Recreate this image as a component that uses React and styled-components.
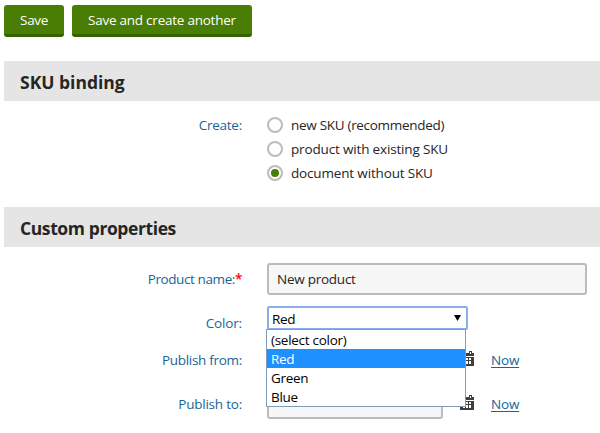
import React from "react";
import styled, { createGlobalStyle, css } from "styled-components";

const Global = createGlobalStyle`
  * { box-sizing: border-box; }
  body {
    margin: 0;
    width: 600px;
    height: 433px;
    overflow: hidden;
    background: #fff;
    color: #262524;
    font: 13.5px/20px "Open Sans", "Segoe UI", sans-serif;
    letter-spacing: -0.28px;
  }
`;

const Page = styled.main`
  padding: 5px 0 0 4px;
`;

const Toolbar = styled.div`
  display: flex;
  gap: 8px;
  height: 32px;
`;

const Button = styled.button`
  width: ${(p) => p.$width}px;
  height: 32px;
  padding: 0 0 0 16px;
  border: 0;
  border-bottom: 3px solid #386202;
  border-radius: 3px;
  background: #497d04;
  color: #fff;
  font: inherit;
  letter-spacing: ${(p) => p.$spacing || 0}px;
  text-align: left;
  white-space: nowrap;
`;

const SectionHeading = styled.h2`
  height: 40px;
  margin: ${(p) => p.$top}px 0 0;
  padding-left: 16px;
  background: #e5e5e5;
  font-size: 17.5px;
  font-weight: 700;
  line-height: 42px;
  letter-spacing: ${(p) => p.$spacing}px;
`;

const Row = styled.div`
  display: grid;
  grid-template-columns: 238px 1fr;
  column-gap: 25px;
  margin-top: ${(p) => p.$top}px;
`;

const Label = styled.label`
  height: ${(p) => p.$height || 32}px;
  line-height: ${(p) => p.$line || p.$height || 32}px;
  color: #1a6496;
  text-align: right;
  white-space: nowrap;
  letter-spacing: ${(p) => p.$spacing ?? -0.2}px;
`;

const Required = styled.span`
  color: #f00;
  font-weight: 600;
`;

const RadioList = styled.div`
  display: grid;
  grid-auto-rows: 24px;
`;

const RadioOption = styled.div`
  display: flex;
  align-items: center;
  gap: 8px;
  white-space: nowrap;
  letter-spacing: ${(p) => p.$spacing}px;
`;

const RadioMark = styled.span`
  display: grid;
  place-items: center;
  width: 16px;
  height: 16px;
  border: 2px solid #bdbbbb;
  border-radius: 50%;
  background: #fff;
  ${(p) =>
    p.$checked &&
    css`
      &::after {
        content: "";
        width: 8px;
        height: 8px;
        border-radius: 50%;
        background: #497d04;
      }
    `}
`;

const Field = styled.div`
  width: ${(p) => p.$width}px;
  height: 32px;
  padding-left: 8px;
  border: 2px solid #bdbbbb;
  border-radius: 3px;
  background: #f7f7f7;
  line-height: 28px;
  letter-spacing: -0.25px;
`;

const SelectWrap = styled.div`
  position: relative;
  width: 201px;
  height: 24px;
`;

const SelectBox = styled.div`
  display: flex;
  align-items: center;
  justify-content: space-between;
  height: 24px;
  padding: 2px 5px 0 3px;
  border: 2px solid #8aaeeb;
  border-radius: 2px;
  background: #fff;
  color: #000;

  svg {
    display: block;
    margin-top: -3px;
  }
`;

const Options = styled.div`
  position: absolute;
  z-index: 1;
  top: 23px;
  left: -1px;
  width: 200px;
  border: 1px solid #7f9db9;
  background: #fff;
  color: #000;
`;

const Option = styled.div`
  height: 19px;
  padding-left: 4px;
  line-height: 20px;
  background: ${(p) => (p.$active ? "#1e90ff" : "#fff")};
  color: ${(p) => (p.$active ? "#fff" : "#000")};
`;

const DateControl = styled.div`
  display: flex;
  align-items: flex-start;
  height: 32px;

  svg {
    margin: 8px 17px 0;
    flex: none;
  }
`;

const NowLink = styled.a`
  color: #1a6496;
  letter-spacing: -0.2px;
  text-decoration: underline;
  text-underline-offset: 2px;
  line-height: 34px;
`;

const CalendarIcon = () => (
  <svg width="14" height="15" viewBox="0 0 14 15" shapeRendering="crispEdges">
    <path
      fill="#403e3d"
      fillRule="evenodd"
      d="M0 2h2V0h3v2h4V0h3v2h2v3H0zM3 1v2h1V1zM10 1v2h1V1zM0 6h14v9H0zM3 7v2h2V7zM6 7v2h2V7zM9 7v2h2V7zM3 10v3h2v-3zM6 10v3h2v-3zM9 10v3h2v-3z"
    />
  </svg>
);

const DateField = () => (
  <DateControl>
    <Field $width={176} />
    <CalendarIcon />
    <NowLink>Now</NowLink>
  </DateControl>
);

const choices = [
  { text: "new SKU (recommended)", spacing: -0.3 },
  { text: "product with existing SKU", spacing: -0.16 },
  { text: "document without SKU", spacing: -0.16, checked: true },
];

const colors = ["(select color)", "Red", "Green", "Blue"];

export default function App() {
  return (
    <>
      <Global />
      <Page>
        <Toolbar>
          <Button $width={60} $spacing={-0.27}>Save</Button>
          <Button $width={180} $spacing={-0.24}>Save and create another</Button>
        </Toolbar>

        <SectionHeading $top={24} $spacing={0}>SKU binding</SectionHeading>
        <Row $top={12}>
          <Label $height={24} $spacing={-0.25}>Create:</Label>
          <RadioList>
            {choices.map((c) => (
              <RadioOption key={c.text} $spacing={c.spacing}>
                <RadioMark $checked={c.checked} />
                {c.text}
              </RadioOption>
            ))}
          </RadioList>
        </Row>

        <SectionHeading $top={22} $spacing={-0.4}>Custom properties</SectionHeading>
        <Row $top={16}>
          <Label $spacing={-0.4}>
            Product name:<Required>*</Required>
          </Label>
          <Field $width={320}>New product</Field>
        </Row>
        <Row $top={11}>
          <Label $height={34} $spacing={-0.15}>Color:</Label>
          <SelectWrap>
            <SelectBox>
              Red
              <svg width="7" height="6" viewBox="0 0 7 6">
                <path d="M0 0h7L3.5 6z" />
              </svg>
            </SelectBox>
            <Options>
              {colors.map((name) => (
                <Option key={name} $active={name === "Red"}>{name}</Option>
              ))}
            </Options>
          </SelectWrap>
        </Row>
        <Row $top={3}>
          <Label $line={34} $spacing={-0.3}>Publish from:</Label>
          <DateField />
        </Row>
        <Row $top={12}>
          <Label $line={34} $spacing={-0.22}>Publish to:</Label>
          <DateField />
        </Row>
      </Page>
    </>
  );
}
